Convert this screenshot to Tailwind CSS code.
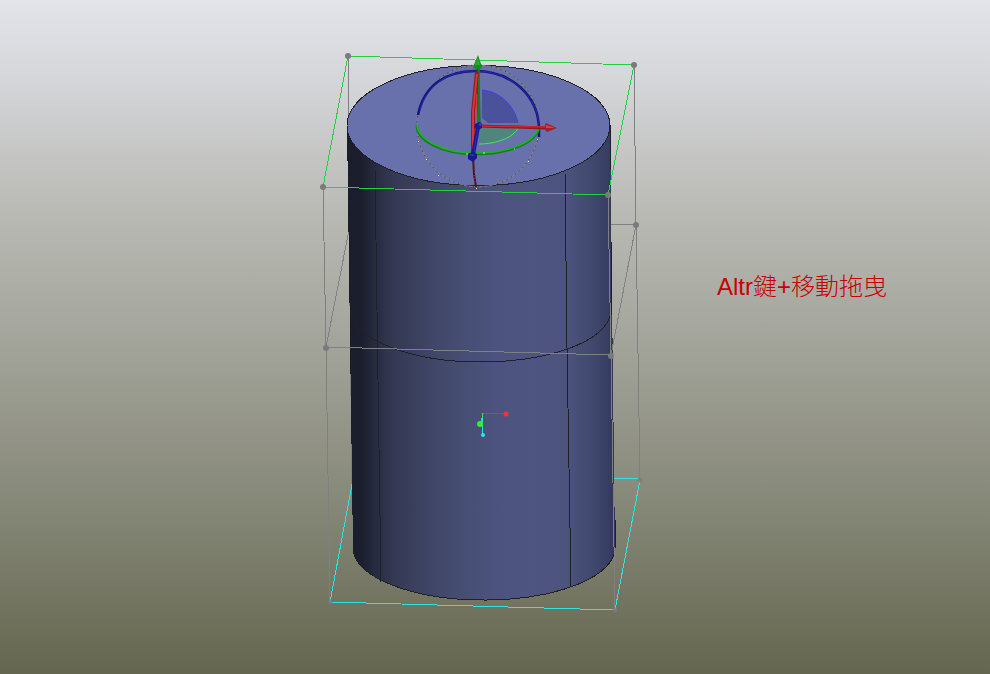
<!DOCTYPE html>
<html lang="zh-Hant">
<head>
  <meta charset="UTF-8">
  <meta name="viewport" content="width=device-width, initial-scale=1.0">
  <title>3D Viewport</title>
  <script src="https://cdn.jsdelivr.net/npm/@tailwindcss/browser@4"></script>
</head>
<body class="min-h-screen bg-[#65664f]">
  <main class="h-screen w-full overflow-hidden bg-[linear-gradient(to_bottom,#e2e4ea_0%,#d4d6d9_12%,#c8c8c8_21%,#b7b8b2_33%,#96978b_62%,#7d806e_81%,#65664f_100%)]">
    <svg class="block h-full w-full" viewBox="0 0 990 674" fill="none">
      <defs>
        <linearGradient id="side" gradientUnits="userSpaceOnUse" x1="348" y1="0" x2="615" y2="0">
          <stop offset="0" stop-color="#1b1d2a" />
          <stop offset="0.05" stop-color="#1b1e2c" />
          <stop offset="0.1" stop-color="#272b40" />
          <stop offset="0.17" stop-color="#343853" />
          <stop offset="0.34" stop-color="#414869" />
          <stop offset="0.45" stop-color="#474f75" />
          <stop offset="0.56" stop-color="#4c537e" />
          <stop offset="0.7" stop-color="#4f5581" />
          <stop offset="0.82" stop-color="#4c537d" />
          <stop offset="0.9" stop-color="#434a70" />
          <stop offset="0.97" stop-color="#383f62" />
          <stop offset="1" stop-color="#30365a" />
        </linearGradient>
      </defs>

      <!-- Bounding box behind the body -->
      <g stroke="#808084" shape-rendering="crispEdges">
        <path d="M348 56L350 225L326 347M609 224H636" />
        <path d="M352 485L348 125" />
      </g>
      <path d="M330 602L353 479M612 478H623L639 479" stroke="#2fe4e4" shape-rendering="crispEdges" />

      <!-- Cylinder -->
      <g stroke="#202126" shape-rendering="crispEdges">
        <path d="M347 125L353 549A131 52 0 0 0 615 547L610 125Z" fill="url(#side)" stroke="none" />
        <path d="M353 549A131 52 0 0 0 615 547" />
        <path d="M610 125V170M611 240L612 315M615 520V548" />
        <ellipse cx="478.5" cy="125.5" rx="131.5" ry="60" fill="#6871ac" />
        <path d="M375 168L376 240L378 380L381 582M565 172L567 348L571 587" />
        <path d="M351 313C356 341 414 362 480 362S605 343 611 313" />
      </g>

      <!-- Bounding box in front -->
      <g stroke="#808084" shape-rendering="crispEdges">
        <path d="M323 187L326 347L611 355L636 225L634 65M326 347L330 602M608 195L611 355L615 610M636 225L640 480" />
      </g>
      <path d="M348 56L323 187L608 195L634 65Z" stroke="#26cf40" shape-rendering="crispEdges" />
      <path d="M330 602L615 610L640 480" stroke="#2fe4e4" shape-rendering="crispEdges" />
      <g fill="#7b7b7f">
        <circle cx="348" cy="56" r="3" />
        <circle cx="634" cy="65" r="3" />
        <circle cx="323" cy="187" r="3" />
        <circle cx="608" cy="195" r="3" />
        <circle cx="636" cy="225" r="3" />
        <circle cx="326" cy="348" r="3" />
        <circle cx="611" cy="356" r="3" />
        <circle cx="330" cy="602" r="2.5" fill-opacity="0.8" />
        <circle cx="615" cy="610" r="2.5" fill-opacity="0.8" />
        <circle cx="640" cy="480" r="2.5" fill-opacity="0.8" />
      </g>

      <!-- Rotation rings -->
      <circle cx="478" cy="126" r="61" stroke="#85837f" />
      <circle cx="478" cy="126" r="61" stroke="#292933" stroke-dasharray="1 4" />
      <path d="M418 141h1M426 159h1M438 175h1M476 188h1M528 161h1M537 139h1" stroke="#fff" shape-rendering="crispEdges" />
      <path d="M482 90C501 92 514 106 518 123H488L482 118Z" fill="#4b529b" />
      <path d="M482 90C501 92 514 106 518 123" stroke="#3c3cf0" />
      <path d="M480 128H518C513 138 496 144 479 144Z" fill="#50857f" />
      <path d="M518 128C513 138 496 144 479 144" stroke="#43ed4b" />
      <path d="M418 115C424 85 446 71 475 71C512 71 539 96 539 130V137" stroke="#15157b" stroke-width="2.5" />
      <path d="M420 110C427 85 448 71 475 71C512 71 538 97 539 126" stroke="#2828b5" />
      <path d="M417 125C416 140 441 154 476 154C510 154 536 143 540 126" stroke="#157d18" stroke-width="2.5" />
      <path d="M417 125C418 139 441 153 476 153C510 153 535 142 539 127" stroke="#1db723" stroke-width="1.5" />
      <path d="M473 157L474 174L476 187" stroke="#4a151c" stroke-width="2" />
      <path d="M474 160L475 184" stroke="#8a3a4a" stroke-dasharray="1 2" />
      <path d="M483 153h2M466 154h2M514 149h1" stroke="#b7e7b5" />

      <!-- Axes -->
      <path d="M478 66L479 124" stroke="#12631a" stroke-width="3" />
      <path d="M479 68L479 122" stroke="#249329" />
      <path d="M477 72L473 112V154" stroke="#8d1d26" stroke-width="4" />
      <path d="M477 74L473 112V150" stroke="#dc3238" stroke-width="2" />
      <path d="M477 94L475 134" stroke="#e0343a" />
      <path d="M478 127L473 155" stroke="#18198a" stroke-width="4" />
      <path d="M478 127L474 152" stroke="#2a2bc0" />
      <path d="M480 126L547 128" stroke="#8e1820" stroke-width="3" />
      <path d="M480 126L547 127" stroke="#cf242b" stroke-width="1.5" />
      <path d="M478 55L482 67L480 69H475L473 67Z" fill="#149021" />
      <path d="M478 57L480 65H475Z" fill="#27aa32" />
      <path d="M546 123L557 128L547 132L545 130V125Z" fill="#a3202a" />
      <path d="M546 125L555 128L546 128Z" fill="#d34348" />
      <path d="M475 124L479 122L482 123V128L478 130L474 128Z" fill="#191b91" />
      <path d="M479 123h3v3h-3z" fill="#3032c4" />
      <path d="M468 154L472 152L477 154V158L473 162L468 159Z" fill="#17198d" />
      <path d="M470 154h4v2h-4z" fill="#2d30b0" />

      <!-- World axis marker -->
      <g shape-rendering="crispEdges">
        <path d="M482 414V434" stroke="#35d5f3" />
        <path d="M482 413H499L505 414" stroke="#f5272e" />
        <path d="M482 413V418L481 424" stroke="#27ef32" />
      </g>
      <circle cx="506" cy="414" r="2.5" fill="#fa3036" />
      <circle cx="480" cy="424" r="3" fill="#30f02e" />
      <circle cx="483" cy="435" r="2" fill="#35e0f3" />

      <!-- Hint -->
      <text x="717" y="295" class="fill-[#c80000] font-['Liberation_Sans','Noto_Sans_CJK_TC',sans-serif] text-[24px] font-light">Altr鍵+移動拖曳</text>
    </svg>
  </main>
</body>
</html>
